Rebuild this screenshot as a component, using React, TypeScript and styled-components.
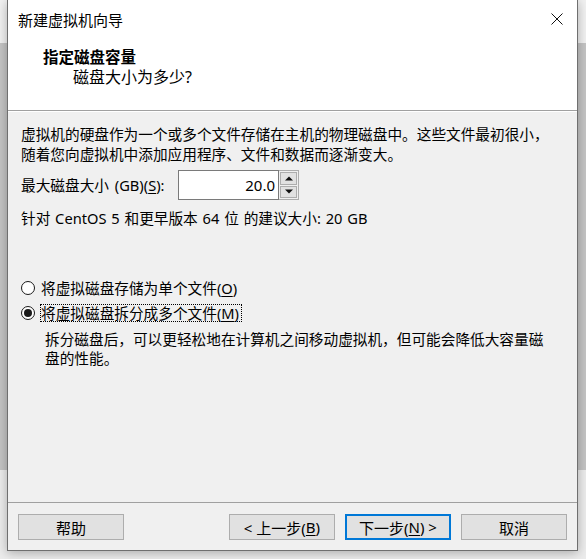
import React from 'react';
import styled, { createGlobalStyle } from 'styled-components';

const GlobalStyle = createGlobalStyle`
  html, body {
    margin: 0;
    padding: 0;
  }
  body {
    font-family: "Noto Sans", "Noto Sans CJK SC", sans-serif;
    color: #000;
  }
`;

const FONT = `"Noto Sans", "Noto Sans CJK SC", sans-serif`;

const Desktop = styled.div`
  width: 586px;
  height: 559px;
  overflow: hidden;
  background: linear-gradient(#f1f1f1 0 43px, #c4c4c4 43px 470px, #ececec 470px);
`;

const Window = styled.div`
  margin-left: 7px;
  width: 571px;
  height: 551px;
  box-sizing: border-box;
  border: 1px solid #6f6f6f;
  border-top: none;
  background: #f0f0f0;
  display: flex;
  flex-direction: column;
  box-shadow: 0 2px 10px rgba(0, 0, 0, 0.28);
  font-family: ${FONT};
`;

const Header = styled.div`
  flex-shrink: 0;
  height: 110px;
  background: #fff;
  border-bottom: 1px solid #a0a0a0;
  box-shadow: 0 1px 0 #fff;
`;

const TitleBar = styled.div`
  height: 38px;
  display: flex;
  align-items: center;
  justify-content: space-between;
  padding-left: 10px;
  font-size: 15px;
`;

const CloseButton = styled.div`
  width: 40px;
  height: 38px;
  display: flex;
  align-items: center;
  justify-content: center;
`;

const Heading = styled.div`
  padding: 10px 0 0 35px;
`;

const HeadTitle = styled.div`
  font-size: 15.5px;
  font-weight: bold;
  line-height: 19px;
`;

const HeadSub = styled.div`
  padding-left: 30px;
  font-size: 16px;
  line-height: 20px;
`;

const Body = styled.div`
  flex: 1;
  padding: 13px 13px 0 13px;
  font-size: 14.67px;
  line-height: 20px;
`;

const Paragraph = styled.p`
  margin: 0;
`;

const FieldRow = styled.div`
  display: flex;
  align-items: center;
  gap: 6px;
  margin-top: 6px;
  height: 30px;
`;

const FieldLabel = styled.span`
  width: 151px;
  white-space: nowrap;
  word-spacing: 2px;
`;

const SpinBox = styled.div`
  display: flex;
  height: 30px;
`;

const NumberBox = styled.div`
  width: 101px;
  height: 30px;
  box-sizing: border-box;
  border: 1px solid #7a7a7a;
  background: #fff;
  text-align: right;
  padding-right: 3px;
  line-height: 28px;
  font-size: 15px;
`;

const Spinner = styled.div`
  width: 20px;
  height: 30px;
  box-sizing: border-box;
  border: 1px solid #adadad;
  border-left: none;
  padding: 1px;
  display: grid;
  grid-template-rows: 1fr 1fr;
  gap: 1px;
  background: #f0f0f0;
`;

const SpinButton = styled.div`
  background: #e1e1e1;
  border: 1px solid #adadad;
  display: flex;
  align-items: center;
  justify-content: center;
`;

const Hint = styled.div`
  margin-top: 8px;
  word-spacing: 1px;
`;

const RadioGroup = styled.div`
  margin-top: 50px;
  display: flex;
  flex-direction: column;
  gap: 5px;
`;

const RadioRow = styled.div`
  display: flex;
  align-items: center;
  height: 20px;
`;

const RadioCircle = styled.span<{ $checked?: boolean }>`
  width: 14px;
  height: 14px;
  box-sizing: border-box;
  border: 1px solid #1a1a1a;
  border-radius: 50%;
  background: #fff;
  display: flex;
  align-items: center;
  justify-content: center;
  margin-right: 6px;
  flex-shrink: 0;

  &::after {
    content: '';
    display: ${(p) => (p.$checked ? 'block' : 'none')};
    width: 8px;
    height: 8px;
    border-radius: 50%;
    background: #1a1a1a;
  }
`;

const RadioLabel = styled.span<{ $focused?: boolean }>`
  line-height: 16px;
  padding: 0 2px 0 0;
  margin-left: -1px;
  border: 1px dotted ${(p) => (p.$focused ? '#000' : 'transparent')};
`;

const Description = styled.p`
  margin: 7px 0 0 24px;
  line-height: 19px;
`;

const Footer = styled.div`
  flex-shrink: 0;
  border-top: 1px solid #a0a0a0;
  padding: 11px 10px 10px 10px;
  display: flex;
  align-items: center;
`;

const ButtonSet = styled.div`
  margin-left: auto;
  display: flex;
  gap: 10px;
`;

const Button = styled.div<{ $default?: boolean }>`
  width: 106px;
  height: 26px;
  box-sizing: border-box;
  background: #e1e1e1;
  border: ${(p) => (p.$default ? '2px solid #0078d7' : '1px solid #adadad')};
  display: flex;
  align-items: center;
  justify-content: center;
  font-size: 15px;
`;

const Key = styled.span`
  text-decoration: underline;
  text-underline-offset: 2px;
`;

const CloseIcon = () => (
  <svg width="12" height="12" viewBox="0 0 12 12">
    <path d="M0.5 0.5 L11.5 11.5 M11.5 0.5 L0.5 11.5" stroke="#111" strokeWidth="1" fill="none" />
  </svg>
);

const Arrow = ({ up }: { up?: boolean }) => (
  <svg width="8" height="5" viewBox="0 0 8 5">
    <path d={up ? 'M0 4.5 L4 0.5 L8 4.5 Z' : 'M0 0.5 L8 0.5 L4 4.5 Z'} fill="#111" />
  </svg>
);

export default function App() {
  return (
    <Desktop>
      <GlobalStyle />
      <Window>
        <Header>
          <TitleBar>
            <span>新建虚拟机向导</span>
            <CloseButton>
              <CloseIcon />
            </CloseButton>
          </TitleBar>
          <Heading>
            <HeadTitle>指定磁盘容量</HeadTitle>
            <HeadSub>磁盘大小为多少?</HeadSub>
          </Heading>
        </Header>

        <Body>
          <Paragraph>
            虚拟机的硬盘作为一个或多个文件存储在主机的物理磁盘中。这些文件最初很小，
            <br />
            随着您向虚拟机中添加应用程序、文件和数据而逐渐变大。
          </Paragraph>

          <FieldRow>
            <FieldLabel>
              最大磁盘大小 (GB)(<Key>S</Key>):
            </FieldLabel>
            <SpinBox>
              <NumberBox>20.0</NumberBox>
              <Spinner>
                <SpinButton>
                  <Arrow up />
                </SpinButton>
                <SpinButton>
                  <Arrow />
                </SpinButton>
              </Spinner>
            </SpinBox>
          </FieldRow>

          <Hint>针对 CentOS 5 和更早版本 64 位 的建议大小: 20 GB</Hint>

          <RadioGroup>
            <RadioRow>
              <RadioCircle />
              <RadioLabel>
                将虚拟磁盘存储为单个文件(<Key>O</Key>)
              </RadioLabel>
            </RadioRow>
            <RadioRow>
              <RadioCircle $checked />
              <RadioLabel $focused>
                将虚拟磁盘拆分成多个文件(<Key>M</Key>)
              </RadioLabel>
            </RadioRow>
          </RadioGroup>

          <Description>
            拆分磁盘后，可以更轻松地在计算机之间移动虚拟机，但可能会降低大容量磁
            <br />
            盘的性能。
          </Description>
        </Body>

        <Footer>
          <Button>帮助</Button>
          <ButtonSet>
            <Button>
              &lt; 上一步(<Key>B</Key>)
            </Button>
            <Button $default>
              下一步(<Key>N</Key>) &gt;
            </Button>
            <Button>取消</Button>
          </ButtonSet>
        </Footer>
      </Window>
    </Desktop>
  );
}
